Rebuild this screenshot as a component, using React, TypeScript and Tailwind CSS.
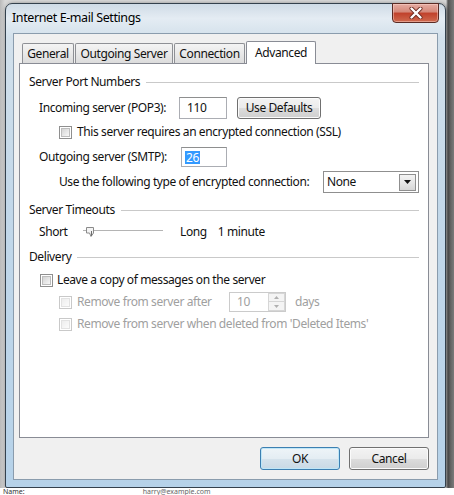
import React from 'react'

// Vista-style "Internet E-mail Settings" dialog, Advanced tab

const Check = ({ disabled = false }: { disabled?: boolean }) =>
    disabled ? (
        <span className="flex h-[13px] w-[13px] shrink-0 items-center justify-center border border-[#c9c9c9] bg-white">
            <span className="h-[9px] w-[9px] border border-[#e2e2e2] bg-[linear-gradient(135deg,#ededed,#fbfbfb)]"/>
        </span>
    ) : (
        <span className="flex h-[13px] w-[13px] shrink-0 items-center justify-center border border-[#8f8f8f] bg-white">
            <span className="h-[9px] w-[9px] border border-[#bdbdbd] bg-[linear-gradient(135deg,#d4d4d4,#f7f7f7)]"/>
        </span>
    )

const Group = ({title, className}: { title: string, className: string }) => (
    <div className={className}>
        <span>{title}</span>
        <span className="ml-[6px] mt-px h-px flex-1 bg-[#c9c9c9]"/>
    </div>
)

const Tab = ({label, width, active = false}: { label: string, width: string, active?: boolean }) =>
    active ? (
        <div
            className={`${width} flex h-[23px] items-start justify-center rounded-t-[2px] border border-b-0 border-[#898c95] bg-white pt-[2px]`}>
            {label}
        </div>
    ) : (
        <div
            className={`${width} mb-px flex h-[20px] items-center justify-center rounded-t-[2px] border border-b-0 border-[#8e9095] bg-[linear-gradient(#f4f4f4,#e9e9e9_50%,#dcdcdc)]`}>
            {label}
        </div>
    )

function Slider() {
    return (
        <svg width="80" height="14" viewBox="0 0 80 14">
            <line x1="0" y1="5.5" x2="80" y2="5.5" stroke="#b4b4b4"/>
            <line x1="0" y1="6.5" x2="80" y2="6.5" stroke="#ffffff"/>
            <path d="M3.5 2.5 H10.5 V8 L8 11.5 L6.5 8 H3.5 Z" fill="#f4f4f4" stroke="#8a8a8a"/>
            <line x1="8.5" y1="6" x2="8.5" y2="11" stroke="#6e6e6e"/>
        </svg>
    )
}

function CloseX() {
    return (
        <svg width="14" height="12" viewBox="0 0 14 12">
            <path d="M2.5 1.5 L11.5 10.5 M11.5 1.5 L2.5 10.5" stroke="#6b2a20" strokeWidth="4" strokeLinecap="round"/>
            <path d="M2.5 1.5 L11.5 10.5 M11.5 1.5 L2.5 10.5" stroke="#ffffff" strokeWidth="2.4" strokeLinecap="round"/>
        </svg>
    )
}

export default function App() {
    return (
        <div
            className="flex h-[495px] w-[454px] flex-col overflow-hidden bg-[linear-gradient(90deg,#b9b9b9_0px,#d8d8d8_5px,#d8d8d8_446px,#555555_448px,#7a7a7a_454px)] font-['Noto_Sans',sans-serif] text-[12px] tracking-[-0.4px] text-[#111]">
            <div
                className="ml-[5px] mt-[3px] flex h-[485px] w-[441px] shrink-0 flex-col rounded-t-[7px] rounded-b-[2px] border border-[#34414d] bg-[linear-gradient(180deg,#cfdbe6_0%,#e4ecf3_3%,#d2e0eb_7%,#c3d8e9_40%,#b6d2e9_100%)] shadow-[1px_1px_4px_rgba(0,0,0,0.55)]">
                {/* title bar */}
                <div className="flex h-[29px] shrink-0 items-start justify-between">
                    <div className="flex h-[29px] items-center pl-[6px] text-[12.5px] text-black">Internet E-mail Settings</div>
                    <div
                        className="mr-[6px] mt-[-1px] flex h-[20px] w-[47px] items-center justify-center rounded-b-[4px] border border-[#5a2b24] bg-[linear-gradient(#e6aca2,#d48778_45%,#c0412b_50%,#cf6a4f_100%)] shadow-[inset_0_0_0_1px_rgba(255,220,210,0.45)]">
                        <CloseX/>
                    </div>
                </div>

                {/* client area */}
                <div className="mx-[7px] flex h-[447px] shrink-0 flex-col border border-[#8a9cad] bg-[#f0f0f0]">
                    <div className="ml-[5px] flex w-[410px] flex-col pt-[7px]">
                        <div className="relative z-10 -mb-px flex h-[23px] items-end pl-[3px]">
                            <Tab label="General" width="w-[52px]"/>
                            <div className="w-px"/>
                            <Tab label="Outgoing Server" width="w-[98px]"/>
                            <div className="w-px"/>
                            <Tab label="Connection" width="w-[71px]"/>
                            <div className="w-px"/>
                            <Tab label="Advanced" width="w-[70px]" active/>
                        </div>

                        <div className="flex h-[375px] flex-col border border-[#898c95] bg-white px-[9px]">
                            <Group title="Server Port Numbers" className="mt-[8px] flex h-[20px] items-center"/>

                            <div className="mt-[5px] flex h-[22px] items-center pl-[10px]">
                                <span className="w-[140px]">Incoming server (POP3):</span>
                                <span
                                    className="flex h-[22px] w-[48px] items-center border border-[#abadb3] border-t-[#8e8f8f] bg-white pl-[7px]">110</span>
                                <button
                                    className="ml-[10px] flex h-[22px] w-[84px] items-center justify-center rounded-[3px] border border-[#707070] bg-[linear-gradient(#f3f3f3,#ebebeb_50%,#dddddd_50%,#cfcfcf)] shadow-[inset_0_0_0_1px_#fbfbfb]">
                                    Use Defaults
                                </button>
                            </div>

                            <div className="mt-[5px] flex h-[16px] items-center pl-[30px]">
                                <Check/>
                                <span className="ml-[5px]">This server requires an encrypted connection (SSL)</span>
                            </div>

                            <div className="mt-[7px] flex h-[20px] items-center pl-[10px]">
                                <span className="w-[142px]">Outgoing server (SMTP):</span>
                                <span
                                    className="flex h-[20px] w-[46px] items-center border border-[#abadb3] border-t-[#8e8f8f] bg-white pl-[3px]">
                                    <span className="bg-[#3399ff] px-[1px] leading-[13px] text-white">26</span>
                                </span>
                            </div>

                            <div className="mt-[4px] flex h-[22px] items-center pl-[30px]">
                                <span>Use the following type of encrypted connection:</span>
                                <div
                                    className="ml-auto flex h-[22px] w-[96px] items-center justify-between border border-[#8f8f8f] bg-white pl-[3px] pr-[2px]">
                                    <span>None</span>
                                    <span
                                        className="flex h-[17px] w-[17px] items-center justify-center border border-[#8f8f8f] bg-[linear-gradient(#f4f4f4,#e6e6e6_50%,#d6d6d6)]">
                                        <svg width="7" height="4" viewBox="0 0 7 4">
                                            <path d="M0 0 H7 L3.5 4 Z" fill="#111"/>
                                        </svg>
                                    </span>
                                </div>
                            </div>

                            <Group title="Server Timeouts" className="mt-[7px] flex h-[20px] items-center"/>

                            <div className="mt-[2px] flex h-[20px] items-center pl-[10px]">
                                <span className="w-[44px]">Short</span>
                                <Slider/>
                                <span className="ml-[17px]">Long</span>
                                <span className="ml-[11px]">1 minute</span>
                            </div>

                            <Group title="Delivery" className="mt-[5px] flex h-[20px] items-center"/>

                            <div className="mt-[5px] flex h-[16px] items-center pl-[11px]">
                                <Check/>
                                <span className="ml-[4px]">Leave a copy of messages on the server</span>
                            </div>

                            <div className="mt-[4px] flex h-[20px] items-center pl-[30px] text-[#a0a0a0]">
                                <Check disabled/>
                                <span className="ml-[5px] w-[152px]">Remove from server after</span>
                                <div className="flex h-[20px] w-[57px] items-center border border-[#cbcbcb] bg-white pl-[7px]">
                                    <span>10</span>
                                    <div className="ml-auto flex h-[18px] w-[17px] flex-col">
                                        <span
                                            className="flex h-[9px] items-center justify-center border border-[#d6d6d6] bg-[#f4f4f4]">
                                            <svg width="5" height="3" viewBox="0 0 5 3"><path d="M0 3 H5 L2.5 0 Z"
                                                                                              fill="#b0b0b0"/></svg>
                                        </span>
                                        <span
                                            className="flex h-[9px] items-center justify-center border border-t-0 border-[#d6d6d6] bg-[#f4f4f4]">
                                            <svg width="5" height="3" viewBox="0 0 5 3"><path d="M0 0 H5 L2.5 3 Z"
                                                                                              fill="#b0b0b0"/></svg>
                                        </span>
                                    </div>
                                </div>
                                <span className="ml-[9px]">days</span>
                            </div>

                            <div className="mt-[4px] flex h-[16px] items-center pl-[30px] text-[#a0a0a0]">
                                <Check disabled/>
                                <span className="ml-[5px]">Remove from server when deleted from 'Deleted Items'</span>
                            </div>
                        </div>

                        <div className="mt-[9px] flex justify-end gap-[9px]">
                            <button
                                className="flex h-[23px] w-[80px] items-center justify-center rounded-[3px] border border-[#3c7fb1] bg-[linear-gradient(#eef4f8,#e4edf3_50%,#d6e3ec_50%,#c9d9e5)] shadow-[inset_0_0_0_1px_#bfe6f7]">
                                OK
                            </button>
                            <button
                                className="flex h-[23px] w-[80px] items-center justify-center rounded-[3px] border border-[#707070] bg-[linear-gradient(#f3f3f3,#ebebeb_50%,#dddddd_50%,#cfcfcf)] shadow-[inset_0_0_0_1px_#fbfbfb]">
                                Cancel
                            </button>
                        </div>
                    </div>
                </div>
            </div>

            {/* the list behind the dialog */}
            <div className="flex h-[7px] shrink-0 items-center bg-white pl-[3px] text-[7px] leading-[7px] tracking-normal text-[#333]">
                <span>Name:</span>
                <span className="ml-[118px] text-[#666]">harry@example.com</span>
            </div>
        </div>
    )
}
